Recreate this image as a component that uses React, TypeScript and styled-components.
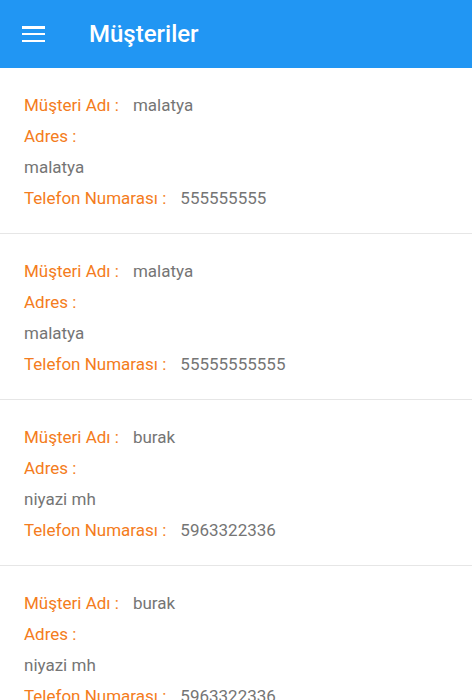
import React from "react";
import styled, { createGlobalStyle } from "styled-components";

const Global = createGlobalStyle`
  html, body { margin: 0; padding: 0; background: #fff; }
  body { font-family: Roboto, "Noto Sans", sans-serif; }
`;

const Page = styled.div`
  width: 472px;
  height: 700px;
  overflow: hidden;
  background: #fff;
`;

const AppBar = styled.header`
  height: 68px;
  background: #2196f3;
  display: flex;
  align-items: center;
  padding-left: 22px;
  box-sizing: border-box;
`;

const MenuButton = styled.div`
  width: 23px;
  height: 16px;
  display: flex;
  flex-direction: column;
  justify-content: space-between;
`;

const MenuBar = styled.span`
  display: block;
  height: 2.5px;
  background: #fff;
`;

const Title = styled.h1`
  margin: 0 0 0 44px;
  font-family: Roboto, sans-serif;
  font-weight: 500;
  font-size: 24px;
  color: #fff;
`;

const Card = styled.div`
  padding: 22px 24px 19px;
  border-bottom: 1px solid #e6e6e6;
`;

const Line = styled.div`
  font-size: 17px;
  line-height: 31px;
  height: 31px;
  white-space: nowrap;
`;

const Label = styled.span`
  color: #f47c20;
`;

const Value = styled.span<{ $gap?: boolean }>`
  color: #757575;
  margin-left: ${(p) => (p.$gap ? "14px" : "0")};
`;

const customers = [
  { name: "malatya", address: "malatya", phone: "555555555" },
  { name: "malatya", address: "malatya", phone: "55555555555" },
  { name: "burak", address: "niyazi mh", phone: "5963322336" },
  { name: "burak", address: "niyazi mh", phone: "5963322336" },
];

export default function App() {
  return (
    <Page>
      <Global />
      <AppBar>
        <MenuButton>
          <MenuBar />
          <MenuBar />
          <MenuBar />
        </MenuButton>
        <Title>Müşteriler</Title>
      </AppBar>
      {customers.map((c, i) => (
        <Card key={i}>
          <Line>
            <Label>Müşteri Adı :</Label>
            <Value $gap>{c.name}</Value>
          </Line>
          <Line>
            <Label>Adres :</Label>
          </Line>
          <Line>
            <Value>{c.address}</Value>
          </Line>
          <Line>
            <Label>Telefon Numarası :</Label>
            <Value $gap>{c.phone}</Value>
          </Line>
        </Card>
      ))}
    </Page>
  );
}
